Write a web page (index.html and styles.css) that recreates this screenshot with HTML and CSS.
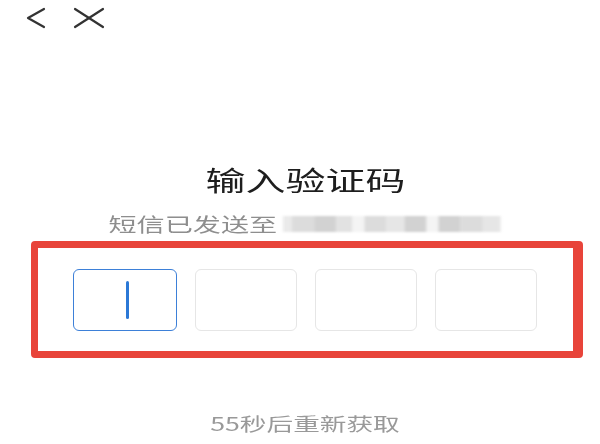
FILE: index.html
```html
<!DOCTYPE html>
<html lang="zh-CN">

<head>
  <meta charset="UTF-8">
  <title>输入验证码</title>
  <meta name="viewport" content="width=device-width, initial-scale=1">
  <link rel="stylesheet" href="styles.css">
</head>

<body>
  <header class="topbar">
    <a class="icon-btn back" href="#" aria-label="返回">
      <svg width="20" height="24" viewBox="0 0 20 24">
        <polyline points="18,3 2,12 18,21" fill="none" stroke="#333" stroke-width="2.2" stroke-linecap="round" stroke-linejoin="round" />
      </svg>
    </a>
    <a class="icon-btn close" href="#" aria-label="关闭">
      <svg width="32" height="24" viewBox="0 0 32 24">
        <line x1="2" y1="3" x2="30" y2="21" stroke="#333" stroke-width="2.2" stroke-linecap="round" />
        <line x1="30" y1="3" x2="2" y2="21" stroke="#333" stroke-width="2.2" stroke-linecap="round" />
      </svg>
    </a>
  </header>

  <main class="content">
    <h1 class="title">输入验证码</h1>
    <p class="sub">
      <span>短信已发送至</span>
      <span class="masked">
        <i class="m1"></i><i class="m2"></i><i class="m3"></i><i class="m4"></i><i class="gap"></i><i class="m2"></i><i class="m5"></i><i class="m3"></i><i class="gap"></i><i class="m3"></i><i class="m2"></i><i class="m5"></i>
      </span>
    </p>

    <div class="highlight">
      <div class="code-boxes">
        <div class="cell active"><span class="caret"></span></div>
        <div class="cell"></div>
        <div class="cell"></div>
        <div class="cell"></div>
      </div>
    </div>

    <p class="resend">55秒后重新获取</p>
  </main>
</body>

</html>
```

FILE: styles.css
```css
body {
  font-family: "Noto Sans CJK SC", "Noto Sans", sans-serif;
  margin: 0;
  padding: 0;
  background: #fff;
  color: #222;
  overflow: hidden;
}

.topbar {
  display: flex;
  align-items: center;
  height: 36px;
  padding-left: 26px;
  gap: 27px;
}

.icon-btn {
  display: flex;
}

.content {
  padding-left: 10px;
}

/* the screen is stretched sideways, so the text is too */
.title,
.sub,
.resend {
  width: fit-content;
  margin: 0 auto;
  text-align: center;
  transform: scaleX(1.48);
}

.title {
  margin-top: 126px;
  font-size: 27px;
  line-height: 36px;
  font-weight: 400;
  color: #1e1e1e;
}

.sub {
  margin-top: 13px;
  font-size: 19px;
  line-height: 26px;
  color: #8e8e8e;
  display: flex;
  align-items: center;
  gap: 4px;
}

.masked {
  display: flex;
  height: 16px;
  filter: blur(1.2px);
}

.masked i {
  display: block;
  width: 13px;
  height: 16px;
  background: #ddd;
}

.masked .m1 { width: 6px; background: #eaeaea; }
.masked .m2 { background: #dcdcdc; width: 15px; }
.masked .m3 { background: #d2d2d2; width: 15px; }
.masked .m4 { background: #e2e2e2; width: 11px; }
.masked .m5 { background: #e6e6e6; width: 12px; }
.masked .gap { background: #f4f4f4; width: 8px; }

.highlight {
  margin: 4px 17px 0 21px;
  border: 7px solid #e8443a;
  border-right-width: 10px;
  border-radius: 4px;
  padding: 21px 0 20px 35px;
}

.code-boxes {
  display: flex;
  gap: 18px;
}

.cell {
  width: 102px;
  height: 62px;
  box-sizing: border-box;
  border: 1.5px solid #e6e6e6;
  border-radius: 6px;
  display: flex;
  align-items: center;
  justify-content: center;
}

.cell.active {
  width: 104px;
  border-color: #3d80d8;
}

.caret {
  width: 3px;
  height: 38px;
  margin-left: 4px;
  border-radius: 2px;
  background: #2b78d6;
}

.resend {
  margin-top: 52px;
  font-size: 18px;
  line-height: 26px;
  color: #999;
}
```
